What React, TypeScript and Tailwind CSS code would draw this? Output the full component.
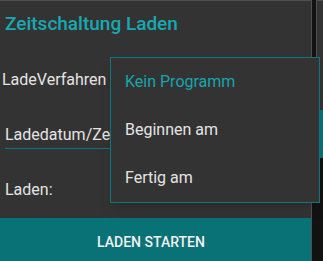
import React from 'react'

const font = { fontFamily: 'Roboto, "Liberation Sans", sans-serif' }

function OptionItem({ label, active }: { label: string; active?: boolean }) {
  return (
    <div className={`flex h-12 items-center px-[14px] text-[16px] leading-6 ${active ? 'text-[#17a5ad]' : 'text-[#e4e4e4]'}`}>
      {label}
    </div>
  )
}

export default function App() {
  return (
    <div className="relative flex h-[261px] w-[323px] gap-[4px] overflow-hidden bg-[#121212]" style={font}>
      {/* left card */}
      <div className="flex h-[290px] w-[312px] shrink-0 flex-col border-t border-r border-[#4f4f4f] bg-[#333333]">
        <h2 className="px-[5px] pt-[9px] text-[19px] font-medium leading-7 text-[#17a9b2]">Zeitschaltung Laden</h2>
        <div className="mt-[30px] px-[2px] text-[16px] leading-6 text-[#e4e4e4]">LadeVerfahren</div>
        <div className="mx-[5px] mt-[31px] border-b border-[#0f767b] pb-[1px] text-[16px] leading-6 text-[#e4e4e4]">
          Ladedatum/Zeit
        </div>
        <div className="mt-[29px] px-[5px] text-[16px] leading-6 text-[#e4e4e4]">Laden:</div>
        <button className="mt-[16px] flex h-12 w-full items-center justify-center bg-[#097276] pr-[9px] text-[14px] font-medium uppercase text-[#f2f2f2]">
          Laden starten
        </button>
      </div>

      {/* right card (cut off) */}
      <div className="flex h-[158px] w-[200px] shrink-0 flex-col justify-end border-t border-l border-[#4f4f4f] bg-[#333333]">
        <div className="h-12 bg-[#097276]" />
      </div>

      {/* dropdown menu */}
      <div className="absolute left-[110px] top-[57px] w-[210px] border border-[#0f767b] bg-[#333333] shadow-lg">
        <OptionItem label="Kein Programm" active />
        <OptionItem label="Beginnen am" />
        <OptionItem label="Fertig am" />
      </div>
    </div>
  )
}
